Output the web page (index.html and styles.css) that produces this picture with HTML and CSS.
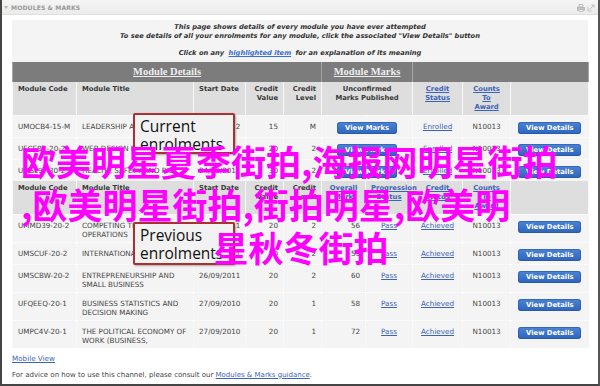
FILE: index.html
```html
<!DOCTYPE html>
<html lang="en">
<head>
<meta charset="utf-8">
<title>Modules &amp; Marks</title>
<link rel="stylesheet" href="styles.css">
</head>
<body>
<div class="frame">
  <div class="bar">
    <span class="caret"></span>
    <span class="bar-title">MODULES &amp; MARKS</span>
    <span class="bar-icons">
      <svg width="8" height="8" viewBox="0 0 8 8"><path d="M2 0.5h3.5l0.5 0.5v2H2z" fill="none" stroke="#b0b0b0" stroke-width="0.8"/><rect x="0.5" y="3.5" width="7" height="3" fill="#c4c4c4" stroke="#a8a8a8" stroke-width="0.6"/><rect x="2" y="5.5" width="4" height="2" fill="#fff" stroke="#b0b0b0" stroke-width="0.6"/></svg>
      <svg width="8" height="8" viewBox="0 0 8 8"><path d="M1 3v4h4" fill="none" stroke="#c0c0c0" stroke-width="0.8"/><path d="M2.5 5.5L7 1M4.5 1H7v2.5" fill="none" stroke="#b0b0b0" stroke-width="0.8"/></svg>
    </span>
  </div>
  <div class="content">
    <div class="panel">
      <div class="intro">
        <p>This page shows details of every module you have ever attempted</p>
        <p>To see details of all your enrolments for any module, click the associated "View Details" button</p>
        <p class="gap">Click on any <a href="#" class="hl">highlighted item</a> for an explanation of its meaning</p>
      </div>
      <table class="marks">
        <colgroup>
          <col class="c-code"><col class="c-title"><col class="c-date"><col class="c-val"><col class="c-lvl"><col class="c-mark"><col class="c-prog"><col class="c-stat"><col class="c-cnt"><col class="c-btn">
        </colgroup>
        <tr class="group">
          <th colspan="5"><a href="#">Module Details</a></th>
          <th colspan="2"><a href="#">Module Marks</a></th>
          <th colspan="3"></th>
        </tr>
        <tr class="head">
          <th>Module Code</th>
          <th>Module Title</th>
          <th>Start Date</th>
          <th class="r">Credit<br>Value</th>
          <th class="r">Credit<br>Level</th>
          <th class="c" colspan="2">Unconfirmed<br>Marks Published</th>
          <th class="c"><a href="#">Credit<br>Status</a></th>
          <th class="c"><a href="#">Counts<br>To<br>Award</a></th>
          <th></th>
        </tr>
        <tr>
          <td>UMOCB4-15-M</td>
          <td class="one">LEADERSHIP AND CHANGE</td>
          <td>19/09/2012</td>
          <td class="r">15</td>
          <td class="r">M</td>
          <td class="c" colspan="2"><span class="btn w60">View Marks</span></td>
          <td class="c"><a href="#">Enrolled</a></td>
          <td class="c">N10013</td>
          <td class="c"><span class="btn">View Details</span></td>
        </tr>
        <tr>
          <td>UFCE8B-20-2</td>
          <td class="one">WEB DESIGN FOR BUSINESS</td>
          <td>24/09/2012</td>
          <td class="r">20</td>
          <td class="r">2</td>
          <td class="c" colspan="2"><span class="btn w60">View Marks</span></td>
          <td class="c"><a href="#">Enrolled</a></td>
          <td class="c">N10013</td>
          <td class="c"><span class="btn">View Details</span></td>
        </tr>
        <tr>
          <td>UMSL9T-30-2</td>
          <td class="one">HEALTH, SAFETY AND RISK</td>
          <td>24/09/2011</td>
          <td class="r">30</td>
          <td class="r">2</td>
          <td class="c" colspan="2"><span class="btn w60">View Marks</span></td>
          <td class="c"><a href="#">Enrolled</a></td>
          <td class="c">N10013</td>
          <td class="c"><span class="btn">View Details</span></td>
        </tr>
        <tr class="head">
          <th>Module Code</th>
          <th>Module Title</th>
          <th>Start Date</th>
          <th class="r">Credit<br>Value</th>
          <th class="r">Credit<br>Level</th>
          <th class="c"><a href="#">Overall<br>Mark</a></th>
          <th class="c"><a href="#">Progression<br>Status</a></th>
          <th class="c"><a href="#">Credit<br>Status</a></th>
          <th class="c"><a href="#">Counts<br>To<br>Award</a></th>
          <th></th>
        </tr>
        <tr>
          <td>UMMD39-20-2</td>
          <td>COMPETING THROUGH OPERATIONS</td>
          <td>26/09/2011</td>
          <td class="r">20</td>
          <td class="r">2</td>
          <td class="r">56</td>
          <td class="c"><a href="#">Pass</a></td>
          <td class="c"><a href="#">Achieved</a></td>
          <td class="c">N10013</td>
          <td class="c"><span class="btn">View Details</span></td>
        </tr>
        <tr>
          <td>UMSCUF-20-2</td>
          <td class="one">INTERNATIONAL BUSINESS</td>
          <td>26/09/2011</td>
          <td class="r">20</td>
          <td class="r">2</td>
          <td class="r">53</td>
          <td class="c"><a href="#">Pass</a></td>
          <td class="c"><a href="#">Achieved</a></td>
          <td class="c">N10013</td>
          <td class="c"><span class="btn">View Details</span></td>
        </tr>
        <tr>
          <td>UMSCBW-20-2</td>
          <td>ENTREPRENEURSHIP AND SMALL BUSINESS</td>
          <td>26/09/2011</td>
          <td class="r">20</td>
          <td class="r">2</td>
          <td class="r">60</td>
          <td class="c"><a href="#">Pass</a></td>
          <td class="c"><a href="#">Achieved</a></td>
          <td class="c">N10013</td>
          <td class="c"><span class="btn">View Details</span></td>
        </tr>
        <tr>
          <td>UFQEEQ-20-1</td>
          <td>BUSINESS STATISTICS AND DECISION MAKING</td>
          <td>27/09/2010</td>
          <td class="r">20</td>
          <td class="r">1</td>
          <td class="r">58</td>
          <td class="c"><a href="#">Pass</a></td>
          <td class="c"><a href="#">Achieved</a></td>
          <td class="c">N10013</td>
          <td class="c"><span class="btn">View Details</span></td>
        </tr>
        <tr>
          <td>UMPC4V-20-1</td>
          <td>THE POLITICAL ECONOMY OF WORK (BUSINESS,</td>
          <td>27/09/2010</td>
          <td class="r">20</td>
          <td class="r">1</td>
          <td class="r">72</td>
          <td class="c"><a href="#">Pass</a></td>
          <td class="c"><a href="#">Achieved</a></td>
          <td class="c">N10013</td>
          <td class="c"><span class="btn">View Details</span></td>
        </tr>
      </table>
    </div>
    <p class="mobile"><a href="#">Mobile View</a></p>
    <p class="advice">For advice on how to use this channel, please consult our <a href="#">Modules &amp; Marks guidance</a>.</p>
  </div>

  <div class="callout callout-current">Current<br>enrolments</div>
  <div class="callout callout-previous">Previous<br>enrolments</div>

  <div class="overlay">
    <span class="ol-line">欧美明星夏季街拍,海报网明星街拍</span>
    <span class="ol-line">,欧美明星街拍,街拍明星,欧美明</span>
    <span class="ol-line ol-center">星秋冬街拍</span>
  </div>
</div>
</body>
</html>
```
FILE: styles.css
```css
* { box-sizing: border-box; }
html, body { margin: 0; padding: 0; }
body {
  width: 600px;
  height: 386px;
  overflow: hidden;
  background: #fff;
  font-family: "DejaVu Sans", Verdana, sans-serif;
  font-size: 7.2px;
  color: #444;
}
a { color: #3b63b8; text-decoration: underline; }

.frame {
  position: relative;
  height: 386px;
  border-left: 2px solid #454545;
  border-right: 2px solid #555;
  border-bottom: 2px solid #454545;
  overflow: hidden;
}

/* title bar */
.bar {
  height: 15px;
  display: flex;
  align-items: center;
  padding: 0 3px 0 2px;
  background: linear-gradient(#f5f5f5, #ebebeb);
  border-bottom: 1px solid #e0e0e0;
}
.caret {
  width: 0; height: 0;
  border-left: 2.5px solid transparent;
  border-right: 2.5px solid transparent;
  border-top: 3px solid #b5b5b5;
  margin-right: 3px;
}
.bar-title {
  font-weight: bold;
  font-size: 6.1px;
  color: #9a9a9a;
  letter-spacing: 0.1px;
}
.bar-icons {
  margin-left: auto;
  display: flex;
  gap: 2px;
  padding-top: 1px;
}

/* content */
.content { padding: 5px 10px 0; }
.panel { background: #f4f4f4; }

.intro {
  padding: 3px 0 4px;
  text-align: center;
  font-weight: bold;
  font-style: italic;
  font-size: 6.7px;
  line-height: 8.7px;
  color: #333;
}
.intro p { margin: 0; }
.intro .gap { margin-top: 8.7px; }
.intro .hl { color: #3b6fd0; padding: 0 2px; }

/* table */
.marks {
  width: 576px;
  border-collapse: collapse;
  table-layout: fixed;
}
.c-code { width: 64px; }
.c-title { width: 117px; }
.c-date { width: 52px; }
.c-val { width: 38px; }
.c-lvl { width: 38px; }
.c-mark { width: 44px; }
.c-prog { width: 47px; }
.c-stat { width: 50px; }
.c-cnt { width: 48px; }
.c-btn { width: 78px; }

.group th {
  height: 20px;
  background: #7c7c7c;
  border-left: 1px solid #a5a5a5;
  border-right: 1px solid #a5a5a5;
  padding: 0;
  text-align: center;
  font-family: "Liberation Serif", "Times New Roman", serif;
  font-weight: bold;
  font-size: 10.5px;
}
.group th a { color: #eeeeee; }

.head th {
  background: #dedede;
  border-left: 1px solid #f8f8f8;
  border-right: 1px solid #f8f8f8;
  vertical-align: top;
  text-align: left;
  padding: 3px 5px 3px;
  height: 33px;
  font-size: 6.8px;
  line-height: 9px;
  font-weight: bold;
  color: #3a3a3a;
  white-space: nowrap;
}
.head th a { color: #3b63b8; }

.marks td {
  background: #f4f4f4;
  border-top: 1px dotted #ffffff;
  border-left: 1px dotted #fdfdfd;
  vertical-align: top;
  padding: 6px 5px 3px;
  line-height: 9px;
  color: #464646;
  overflow: hidden;
}
.marks td.one { white-space: nowrap; }
.r { text-align: right !important; }
.c { text-align: center !important; }

.btn {
  display: inline-block;
  vertical-align: top;
  width: 63px;
  height: 12px;
  line-height: 12px;
  border-radius: 3px;
  background: linear-gradient(#4b84d6, #2e63ba);
  border: 0;
  box-shadow: inset 0 0 0 1px rgba(30, 80, 160, 0.5);
  color: #fff;
  font-weight: bold;
  font-size: 6.8px;
  text-align: center;
}
.btn.w60 { width: 60px; }

.mobile {
  margin: 6px 0 0;
  line-height: 9px;
  font-size: 7.2px;
}
.advice {
  margin: 8px 0 0;
  line-height: 9px;
  font-size: 7px;
  color: #444;
}

/* callouts over the table */
.callout {
  position: absolute;
  left: 131px;
  width: 102px;
  padding: 2px 5px;
  background: #f2f2f2;
  border: 2px solid #a83232;
  border-radius: 2px;
  box-shadow: 1px 1px 2px rgba(0, 0, 0, 0.3);
  font-family: "Open Sans", "DejaVu Sans", sans-serif;
  font-size: 15.5px;
  line-height: 18px;
  color: #111;
}
.callout-current { top: 113px; height: 41px; }
.callout-previous { top: 222px; height: 43px; }

/* magenta overlay text */
.overlay {
  position: absolute;
  left: 19px;
  top: 139px;
  width: 560px;
  font-family: "Noto Sans CJK SC", sans-serif;
  font-weight: bold;
  font-size: 35px;
  line-height: 43px;
  color: #ff00ff;
  white-space: nowrap;
  letter-spacing: 0;
}
.ol-line { display: block; }
.ol-center { text-align: center; }
```
